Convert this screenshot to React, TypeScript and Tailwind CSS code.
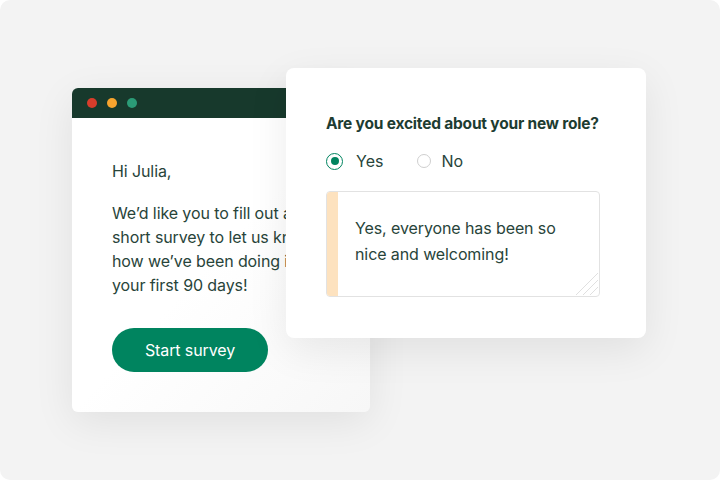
import React from "react";

export default function App() {
  const font = { fontFamily: "Inter, 'Liberation Sans', sans-serif" };
  return (
    <div className="w-[720px] h-[480px] bg-white" style={font}>
      <div className="relative w-[720px] h-[480px] rounded-[10px] bg-[#f3f3f3] overflow-hidden">
        {/* back card: email */}
        <div className="absolute left-[72px] top-[88px] w-[298px] h-[324px] rounded-[6px] overflow-hidden bg-gradient-to-br from-white via-white to-[#f7f7f7] shadow-[0_10px_40px_rgba(0,0,0,0.08)]">
          <div className="h-[30px] bg-[#17392c] flex items-center gap-[10px] pl-[15px]">
            <span className="w-[10px] h-[10px] rounded-full bg-[#d73d2b]" />
            <span className="w-[10px] h-[10px] rounded-full bg-[#f7a42e]" />
            <span className="w-[10px] h-[10px] rounded-full bg-[#2b9b77]" />
          </div>
          <div className="pl-[40px] pt-[41px] text-[16px] text-[#28443a] tracking-[-0.1px]">
            <p className="leading-[24px]">Hi Julia,</p>
            <p className="mt-[18px] leading-[24px] whitespace-nowrap">
              We’d like you to fill out a<br />
              short survey to let us know<br />
              how we’ve been doing in<br />
              your first 90 days!
            </p>
            <button className="mt-[31px] w-[156px] h-[44px] rounded-full bg-[#00845f] text-white text-[16px]">
              Start survey
            </button>
          </div>
        </div>

        {/* front card: survey */}
        <div className="absolute left-[286px] top-[68px] w-[360px] h-[270px] rounded-[8px] bg-white shadow-[0_12px_40px_rgba(0,0,0,0.08)] pl-[40px] pt-[45px]">
          <h2 className="text-[15.5px] font-bold text-[#1d3c31] leading-[22px] tracking-[-0.2px]">
            Are you excited about your new role?
          </h2>
          <div className="mt-[16px] flex items-center h-[20px]">
            <span className="w-[17px] h-[17px] rounded-full border-[1.5px] border-[#00845f] flex items-center justify-center">
              <span className="w-[8px] h-[8px] rounded-full bg-[#00845f]" />
            </span>
            <span className="ml-[13px] text-[16px] text-[#28443a]">Yes</span>
            <span className="ml-[34px] w-[14px] h-[14px] rounded-full border border-[#cfcfcf]" />
            <span className="ml-[10px] text-[16px] text-[#28443a]">No</span>
          </div>
          <div className="relative mt-[20px] w-[274px] h-[106px] rounded-[4px] border border-[#e2e2e2] overflow-hidden flex">
            <div className="w-[11px] bg-[#fde2bf]" />
            <div className="pl-[17px] pt-[23px] text-[16px] leading-[26px] text-[#28443a] tracking-[-0.1px]">
              Yes, everyone has been so<br />nice and welcoming!
            </div>
            <svg className="absolute right-[1px] bottom-[1px]" width="24" height="24" viewBox="0 0 24 24">
              <line x1="24" y1="2" x2="2" y2="24" stroke="#e0e0e0" strokeWidth="1" />
              <line x1="24" y1="9" x2="9" y2="24" stroke="#e0e0e0" strokeWidth="1" />
              <line x1="24" y1="16" x2="16" y2="24" stroke="#e0e0e0" strokeWidth="1" />
            </svg>
          </div>
        </div>
      </div>
    </div>
  );
}
